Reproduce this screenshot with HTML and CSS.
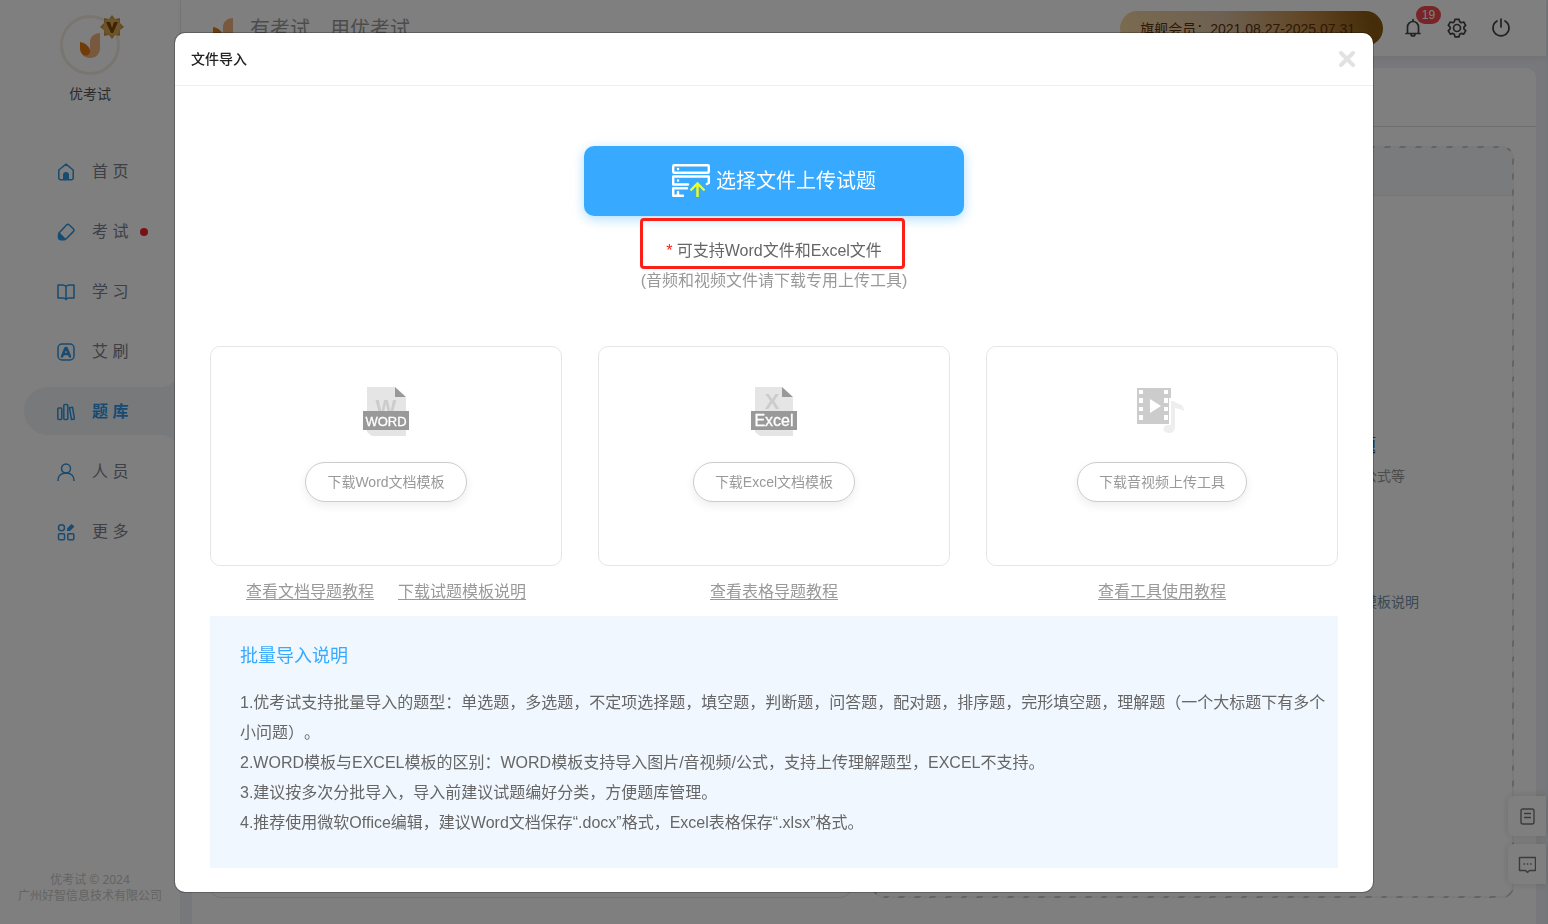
FILE: index.html
```html
<!DOCTYPE html>
<html lang="zh-CN">
<head>
<meta charset="utf-8">
<meta name="viewport" content="width=device-width, initial-scale=1">
<title>优考试</title>
<link rel="stylesheet" href="styles.css">
</head>
<body>
<div class="app">
  <aside class="sidebar">
    <div class="profile">
      <div class="avatar">
        <svg class="avatar-logo" viewBox="0 0 20 25" width="20" height="25" aria-hidden="true">
          <path d="M20 0v15c0 6-4 10-9.500 10-4 0-7-1.500-8.500-4l8-4V9c0-5 4-9 10-9z" fill="#f3b27c"/>
          <path d="M0 9c6 1 10 5 10 9 0 3-2 5-4.500 4.500C2 22 0 19 0 15z" fill="#e07a10"/>
        </svg>
        <svg class="avatar-badge" viewBox="0 0 24 24" width="24" height="24" aria-hidden="true">
          <path d="M12 0l3 4 5-1v5l4 4-4 3v6l-5-1-3 4-3-4-5 1v-6l-4-3 4-4V3l5 1z" fill="#c8963e"/>
          <path d="M12 3l7 3 2 6-3 7-6 2-7-3-2-6 3-7z" fill="#dba955"/>
          <path d="M6 7h4l2 6 2-6h4l-5 11h-2z" fill="#7c4708"/>
        </svg>
      </div>
      <div class="profile-name">优考试</div>
    </div>
    <nav class="nav">
      <a class="nav-item" href="#">
        <svg class="icon" viewBox="0 0 18 18" width="18" height="18" aria-hidden="true"><path d="M1.800 7L9 1.200 16.200 7v8a1.800 1.800 0 0 1-1.800 1.800H3.600A1.800 1.800 0 0 1 1.800 15z"/><path class="solid" d="M6 16.500V12a3 3 0 0 1 6 0v4.500z"/></svg>
        <span>首 页</span>
      </a>
      <a class="nav-item" href="#">
        <svg class="icon" viewBox="0 0 18 18" width="18" height="18" aria-hidden="true"><path d="M2 10l7.500-8a2 2 0 0 1 2.800 0l4 3.800a2 2 0 0 1 0 2.800L9 16a3 3 0 0 1-2 .8H4A2.500 2.500 0 0 1 1.500 14v-2z"/><path class="solid" d="M2 9l7 7-2 1H4l-2.500-2.500V11z"/></svg>
        <span>考 试</span><i class="dot"></i>
      </a>
      <a class="nav-item" href="#">
        <svg class="icon" viewBox="0 0 18 18" width="18" height="18" aria-hidden="true"><path d="M9 3.500C8 2.300 7 2 5.500 2H1v13h5c1.500 0 2.300.4 3 1.500.7-1.100 1.500-1.500 3-1.500h5V2h-4.500C11 2 10 2.300 9 3.500zM9 3.500v13"/></svg>
        <span>学 习</span>
      </a>
      <a class="nav-item" href="#">
        <svg class="icon" viewBox="0 0 18 18" width="18" height="18" aria-hidden="true"><rect x="1" y="1" width="16" height="16" rx="4"/><path class="heavy" d="M5 13.500L8.500 5h1l3.500 8.500M6.500 11h5"/></svg>
        <span>艾 刷</span>
      </a>
      <a class="nav-item active" href="#">
        <svg class="icon" viewBox="0 0 18 18" width="18" height="18" aria-hidden="true"><rect x=".8" y="5" width="4" height="11.500" rx="1"/><rect x="6.800" y="1.500" width="4" height="15" rx="1"/><path d="M12.500 4.800l3-.6 2 11.800-3 .6z"/></svg>
        <span>题 库</span>
      </a>
      <a class="nav-item" href="#">
        <svg class="icon" viewBox="0 0 18 18" width="18" height="18" aria-hidden="true"><circle cx="9" cy="5.500" r="4.500"/><path d="M1 17.500c0-4.500 3-7.500 8-7.500s8 3 8 7.500"/></svg>
        <span>人 员</span>
      </a>
      <a class="nav-item" href="#">
        <svg class="icon" viewBox="0 0 18 18" width="18" height="18" aria-hidden="true"><circle cx="4.500" cy="4.800" r="3"/><rect x="1.500" y="10.800" width="6" height="6" rx="1"/><rect x="10.800" y="10.800" width="6" height="6" rx="1"/><path class="solid" d="M10 5.500L14.500 1 17.500 3.500 13 8h-3z"/></svg>
        <span>更 多</span>
      </a>
    </nav>
    <footer class="copyright">优考试 © 2024<br>广州好智信息技术有限公司</footer>
  </aside>

  <div class="main">
    <header class="topbar">
      <svg class="brand-logo" viewBox="0 0 20 25" width="20" height="25" aria-hidden="true">
        <path d="M20 0v15c0 6-4 10-9.500 10-4 0-7-1.500-8.500-4l8-4V9c0-5 4-9 10-9z" fill="#f3b27c"/>
        <path d="M0 9c6 1 10 5 10 9 0 3-2 5-4.500 4.500C2 22 0 19 0 15z" fill="#e07a10"/>
      </svg>
      <div class="slogan">有考试　用优考试</div>
      <div class="member">旗舰会员：2021.08.27-2025.07.31</div>
      <div class="tools">
        <button class="tool" type="button" aria-label="消息">
          <svg viewBox="0 0 20 20" width="20" height="20"><path d="M4.500 15.500V9a5.500 5.500 0 0 1 11 0v6.500M3 15.500h14M10 3V1.500M8 16a2 2 0 0 0 4 0"/></svg>
          <span class="count">19</span>
        </button>
        <button class="tool" type="button" aria-label="设置">
          <svg viewBox="0 0 20 20" width="20" height="20"><path d="M8 1.300h4l.7 2.500 1.500.9 2.500-.7 2 3.400-1.800 1.800v1.700l1.800 1.800-2 3.400-2.500-.7-1.500.9-.7 2.500H8l-.7-2.500-1.500-.9-2.500.7-2-3.400 1.800-1.800V9.200L1.300 7.400l2-3.400 2.500.7 1.500-.9z"/><circle cx="10" cy="10" r="3.500"/></svg>
        </button>
        <button class="tool" type="button" aria-label="退出">
          <svg viewBox="0 0 20 20" width="20" height="20"><path d="M6 3a8 8 0 1 0 8 0M10 1v8"/></svg>
        </button>
      </div>
    </header>
    <section class="panel">
      <div class="panel-head"></div>
      <div class="panel-body">
        <div class="method"></div>
        <div class="method dashed">
          <div class="method-head"></div>
          <div class="method-title">题</div>
          <div class="method-note">公式等</div>
          <a class="method-link" href="#">模板说明</a>
        </div>
      </div>
    </section>
  </div>
</div>

<div class="floats">
  <button class="float" type="button" aria-label="文档"><svg viewBox="0 0 18 18" width="18" height="18"><rect x="3" y="2" width="13" height="15" rx="2"/><path d="M6 6.500h7M6 10.500h7"/></svg></button>
  <button class="float" type="button" aria-label="反馈"><svg viewBox="0 0 18 18" width="18" height="18"><path d="M1.500 2.500h16v13h-6l-2 2-2-2h-6zM5.500 9H7M8.800 9h1.500M12.100 9h1.500"/></svg></button>
</div>

<div class="overlay">
  <div class="modal" role="dialog" aria-modal="true" aria-labelledby="dialog-title">
    <header class="modal-head">
      <h1 id="dialog-title">文件导入</h1>
      <button class="close" type="button" aria-label="关闭"><svg viewBox="0 0 16 16" width="16" height="16"><path d="M2 2l12 12M14 2L2 14"/></svg></button>
    </header>
    <div class="modal-body">
      <button class="upload" type="button">
        <svg viewBox="0 0 38 34" width="38" height="34" aria-hidden="true">
          <g fill="none" stroke="#fff" stroke-width="2.400" stroke-linecap="round" stroke-linejoin="round">
            <rect x="1.200" y="1.200" width="35.600" height="7.600" rx="1"/>
            <path d="M16 20.500H1.200v-8h35.600v6.500l-2 1M11 31.800H1.200v-7.500H15M6 28v3.500"/>
            <path d="M6 5h.1M6 16.500h.1"/>
          </g>
          <path d="M25.500 33V20.500M18.500 26.500l7-7 7 7" fill="none" stroke="#f4ff0a" stroke-width="2.400"/>
        </svg>
        <span>选择文件上传试题</span>
      </button>
      <div class="hints">
        <p class="hint"><span class="star">*</span> 可支持Word文件和Excel文件</p>
        <p class="subhint">(音频和视频文件请下载专用上传工具)</p>
      </div>

      <div class="cards">
        <div class="column">
          <div class="card">
            <svg viewBox="0 0 46 50" width="46" height="50" aria-hidden="true">
              <path d="M4 0h28l11 11v38H9l-5-4z" fill="#e5e5e5"/><path d="M32 0l11 10H32z" fill="#999"/>
              <text class="glyph" x="23" y="28" text-anchor="middle">W</text>
              <path d="M0 24h46v19H0z" fill="#999"/>
              <text class="tag" x="23" y="39" text-anchor="middle" font-size="13">WORD</text>
            </svg>
            <button class="download" type="button">下载Word文档模板</button>
          </div>
          <div class="links"><a href="#">查看文档导题教程</a><a href="#">下载试题模板说明</a></div>
        </div>
        <div class="column">
          <div class="card">
            <svg viewBox="0 0 46 50" width="46" height="50" aria-hidden="true">
              <path d="M4 0h27l11 11v38H9l-5-4z" fill="#e5e5e5"/><path d="M31 0l11 10H31z" fill="#999"/>
              <text class="glyph" x="21" y="22" text-anchor="middle">X</text>
              <path d="M0 24h46v19H0z" fill="#999"/>
              <text class="tag" x="23" y="39" text-anchor="middle" font-size="16">Excel</text>
            </svg>
            <button class="download" type="button">下载Excel文档模板</button>
          </div>
          <div class="links"><a href="#">查看表格导题教程</a></div>
        </div>
        <div class="column">
          <div class="card">
            <svg viewBox="0 0 50 50" width="50" height="50" aria-hidden="true">
              <path d="M0 1h34v10h-2v26H0z" fill="#ccc"/>
              <path d="M2 3h4v4H2zM2 11h4v5H2zM2 20h4v4H2zM2 28h4v5H2zM27 3h4v4h-4zM27 11h4v5h-4zM27 20h4v4h-4zM27 28h4v5h-4z" fill="#fff"/>
              <path d="M13 12l11 7-11 7z" fill="#fff"/>
              <path d="M34 14h3c2 3 9 2 10 8v2c-3-2-6-2-9-3v19c0 4-3 6-6 6-6 0-8-6-2-8h4z" fill="#eee"/>
            </svg>
            <button class="download" type="button">下载音视频上传工具</button>
          </div>
          <div class="links"><a href="#">查看工具使用教程</a></div>
        </div>
      </div>

      <section class="info">
        <h2>批量导入说明</h2>
        <p>1.优考试支持批量导入的题型：单选题，多选题，不定项选择题，填空题，判断题，问答题，配对题，排序题，完形填空题，理解题（一个大标题下有多个小问题）。</p>
        <p>2.WORD模板与EXCEL模板的区别：WORD模板支持导入图片/音视频/公式，支持上传理解题型，EXCEL不支持。</p>
        <p>3.建议按多次分批导入，导入前建议试题编好分类，方便题库管理。</p>
        <p>4.推荐使用微软Office编辑，建议Word文档保存“.docx”格式，Excel表格保存“.xlsx”格式。</p>
      </section>
    </div>
  </div>
</div>
</body>
</html>
```
FILE: styles.css
```css
*, *::before, *::after { box-sizing: border-box; }
body, h1, h2, p { margin: 0; }
body {
  font-family: "Liberation Sans", "Noto Sans CJK SC", sans-serif;
  font-size: 14px;
  color: #333;
  background: #e6eff4;
  overflow: hidden;
  text-spacing-trim: space-all;
}
button { font: inherit; cursor: pointer; margin: 0; padding: 0; border: 0; background: none; color: inherit; }
svg { display: block; flex: none; }

.app { display: flex; min-height: 100vh; padding-right: 2px; }

/* Sidebar */
.sidebar { width: 181px; flex: none; display: flex; flex-direction: column; background: #fff; border-right: 1px solid #eceef4; }
.profile { display: flex; flex-direction: column; align-items: center; gap: 8px; padding-top: 15px; height: 147px; }
.avatar { position: relative; width: 60px; height: 60px; display: grid; place-items: center; border: 3px solid #f3ede2; border-radius: 50%; }
.avatar-badge { position: absolute; top: -3px; right: -7px; }
.profile-name { line-height: 22px; color: #555; }
.nav { display: flex; flex-direction: column; gap: 12px; padding-left: 24px; }
.nav-item { position: relative; display: flex; align-items: center; gap: 17px; height: 48px; padding-left: 33px; border-radius: 24px 0 0 24px; font-size: 16px; color: #7a808c; text-decoration: none; }
.nav-item span { padding-bottom: 2px; }
.nav-item.active { background: #f0f3f7; color: #2f96e8; font-weight: bold; }
.nav-item.active::before, .nav-item.active::after { content: ""; position: absolute; right: 0; width: 20px; height: 20px; }
.nav-item.active::before { bottom: 100%; background: radial-gradient(circle at 0 0, transparent 20px, #f0f3f7 20px); }
.nav-item.active::after { top: 100%; background: radial-gradient(circle at 0 100%, transparent 20px, #f0f3f7 20px); }
.icon { margin-top: 2px; fill: none; stroke: #2f96e0; stroke-width: 1.5; stroke-linejoin: round; stroke-linecap: round; }
.icon .solid { fill: #2f96e0; stroke: none; }
.icon .heavy { stroke-width: 2.5; }
.dot { width: 8px; height: 8px; margin: 2px 0 0 -5px; border-radius: 50%; background: #f0222c; }
.copyright { margin-top: auto; padding-bottom: 20px; text-align: center; font-family: "Noto Sans", "Noto Sans CJK SC", sans-serif; font-size: 12px; line-height: 16px; color: #c8c8c8; }

/* Page behind the dialog */
.main { flex: 1; min-width: 0; display: flex; flex-direction: column; background: #eff0f6; }
.topbar { display: flex; align-items: center; height: 56px; padding: 0 35px 0 32px; background: #fff; box-shadow: 0 2px 6px rgba(60, 70, 110, .08); }
.brand-logo { margin-top: 4px; }
.slogan { margin-left: 17px; padding-bottom: 2px; font-size: 20px; color: #999; white-space: nowrap; }
.member { margin-left: auto; height: 35px; padding: 0 28px 0 20px; line-height: 37px; border-radius: 18px; white-space: nowrap; color: #5c3008; background: linear-gradient(75deg, #f6d6a0, #dcc2a4 40%, #c48f4c 70%, #8c5a12 95%); }
.tools { display: flex; gap: 24px; margin-left: 20px; }
.tool { position: relative; width: 20px; height: 20px; }
.tool svg { fill: none; stroke: #444; stroke-width: 1.7; stroke-linejoin: round; stroke-linecap: round; }
.count { position: absolute; left: 13px; top: -12px; width: 25px; height: 18px; line-height: 18px; border-radius: 9px; font-size: 12px; color: #fff; background: #f04a50; }
.panel { flex: 1; display: flex; flex-direction: column; margin: 12px 10px 0 11px; border-radius: 10px 10px 0 0; background: #fff; }
.panel-head { height: 59px; border-bottom: 1px solid #dedede; }
.panel-body { flex: 1; display: grid; grid-template-columns: 1fr 1fr; gap: 20px; padding: 19px 22px 26px 17px; }
.method { border: 1px solid #e4e4e4; border-radius: 12px; overflow: hidden; }
.dashed { display: flex; flex-direction: column; align-items: flex-end; border: 2px solid transparent; background: linear-gradient(#fff, #fff) padding-box, repeating-linear-gradient(135deg, #c8c8c8 0 4px, #f4f4f4 4px 11px) border-box; }
.method-head { align-self: stretch; height: 48px; background: #f4f6f9; border-bottom: 1px solid #e8eaee; }
.method-title { margin-top: 235px; padding-right: 136px; line-height: 30px; font-size: 18px; color: #1f5c9c; }
.method-note { padding-right: 107px; line-height: 30px; color: #999; }
.method-link { margin-top: 96px; padding-right: 93px; line-height: 30px; color: #7890a4; text-decoration: none; }
.floats { position: fixed; right: 2px; bottom: 40px; display: flex; flex-direction: column; gap: 8px; }
.float { display: grid; place-items: center; width: 38px; height: 40px; border-radius: 6px 0 0 6px; background: #fff; box-shadow: 0 0 8px rgba(0, 0, 0, .15); }
.float svg { fill: none; stroke: #777; stroke-width: 1.4; stroke-linejoin: round; }

/* Dialog */
.overlay { position: fixed; inset: 0; display: flex; justify-content: center; align-items: flex-start; padding: 33px 16px 32px; overflow: auto; background: rgba(0, 0, 0, .5); }
.modal { width: 100%; max-width: 1198px; border-radius: 10px; background: #fff; box-shadow: 0 0 0 1px rgba(0, 0, 0, .25); }
.modal-head { display: flex; align-items: center; justify-content: space-between; height: 53px; padding: 0 18px 0 16px; border-bottom: 1px solid #eee; }
.modal-head h1 { padding-bottom: 2px; font-size: 14px; font-weight: 500; color: #222; }
.close svg { fill: none; stroke: #e2e2e2; stroke-width: 4; stroke-linecap: round; }
.modal-body { padding: 60px 35px 24px; }
.upload { display: flex; align-items: center; justify-content: center; gap: 6px; width: 380px; height: 70px; margin: 0 auto 20px; border-radius: 10px; font-size: 20px; color: #fff; background: #37a9ff; box-shadow: 0 3px 12px rgba(55, 169, 255, .4); }
.upload span { padding-bottom: 4px; }
.hints { position: relative; width: 268px; margin: 0 auto 50px; font-size: 16px; line-height: 30px; text-align: center; white-space: nowrap; }
.hints::before { content: ""; position: absolute; left: 0; top: -18px; width: 265px; height: 51px; border: 3px solid #fb2017; border-radius: 4px; }
.hint { color: #666; }
.star { color: #fb2017; }
.subhint { color: #999; }
.cards { display: grid; grid-template-columns: repeat(3, 1fr); gap: 36px; }
.card { display: flex; flex-direction: column; align-items: center; gap: 25px; height: 220px; padding-top: 40px; border: 1px solid #e6e6e6; border-radius: 10px; }
.glyph { font-size: 22px; font-weight: bold; fill: #ccc; }
.tag { fill: #fff; stroke: #fff; stroke-width: .3; }
.download { height: 40px; padding: 0 21px 2px; border: 1px solid #ccc; border-radius: 20px; color: #999; background: #fff; box-shadow: 0 4px 10px rgba(0, 0, 0, .07); }
.links { display: flex; justify-content: center; align-items: center; gap: 24px; height: 50px; padding-bottom: 2px; font-size: 16px; }
.links a { color: #999; text-underline-offset: 2px; }
.info { padding: 25px 10px 30px 30px; background: #f0f7fe; font-size: 16px; line-height: 30px; color: #666; }
.info h2 { margin-bottom: 17px; font-size: 18px; font-weight: normal; color: #37a9ff; }
```
